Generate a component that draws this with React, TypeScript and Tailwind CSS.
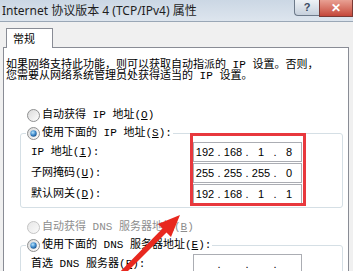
import React, { Fragment } from "react";

function Radio({ id, checked, disabled }: { id: string; checked?: boolean; disabled?: boolean }) {
  return (
    <svg width="13" height="13" viewBox="0 0 13 13" className="shrink-0">
      <defs>
        <linearGradient id={`o${id}`} x1="0" y1="0" x2="1" y2="1">
          <stop offset="0" stopColor={disabled ? "#e6e6e6" : "#d8d8d8"} />
          <stop offset="1" stopColor={disabled ? "#fbfbfb" : "#ffffff"} />
        </linearGradient>
        <radialGradient id={`d${id}`} cx="0.4" cy="0.35" r="0.7">
          <stop offset="0" stopColor="#b9e6ff" />
          <stop offset="0.6" stopColor="#3a86c8" />
          <stop offset="1" stopColor="#1b4f86" />
        </radialGradient>
      </defs>
      <circle cx="6.5" cy="6.5" r="6" fill={`url(#o${id})`} stroke={disabled ? "#c4c4c4" : "#8f9091"} strokeWidth="1" />
      {checked && <circle cx="6.5" cy="6.5" r="3.2" fill={`url(#d${id})`} />}
    </svg>
  );
}

function IpBox({ parts }: { parts: string[] }) {
  return (
    <div className="w-[109px] h-[20px] shrink-0 border border-[#abadb3] bg-white flex items-center pl-[1px] font-['Liberation_Sans',sans-serif] text-[11px] text-black">
      {parts.map((p, i) => (
        <Fragment key={i}>
          <span className="w-[20px] text-center">{p}</span>
          {i < 3 && <span className="w-[8px] text-center">.</span>}
        </Fragment>
      ))}
    </div>
  );
}

function Row({ label, k, parts }: { label: string; k: string; parts: string[] }) {
  return (
    <div className="flex items-center h-[20px] mb-[1px] pl-[10px]">
      <span className="w-[162px] shrink-0 whitespace-nowrap">
        {label}(<span className="underline">{k}</span>):
      </span>
      <IpBox parts={parts} />
    </div>
  );
}

export default function App() {
  return (
    <div className="relative w-[353px] h-[271px] overflow-hidden bg-[#f0f0f0] text-black">
      {/* Title bar */}
      <div className="h-[22px] flex items-start justify-between border-b border-[#9aa7b6] bg-gradient-to-b from-[#cbd7e4] to-[#dde5ee]">
        <div className="h-[21px] flex items-center pl-[2px] font-['Noto_Sans','Noto_Sans_CJK_SC',sans-serif] text-[12px] text-[#1e1e1e] whitespace-nowrap">
          Internet 协议版本 4 (TCP/IPv4) 属性
        </div>
        <div className="flex items-start">
          <div className="w-[25px] h-[16px] rounded-bl-[4px] border border-t-0 border-r-0 border-[#6d7a8a] bg-gradient-to-b from-[#eef2f6] to-[#c6d0dc] flex items-center justify-center font-['Liberation_Sans',sans-serif] text-[11px] font-bold text-[#3a4b62]">
            ?
          </div>
          <div className="w-[34px] h-[17px] border border-t-0 border-[#7a3a35] bg-gradient-to-b from-[#e8a093] to-[#c4463a] flex items-center justify-center font-['Liberation_Sans',sans-serif] text-[12px] font-bold text-white">
            ✕
          </div>
        </div>
      </div>

      {/* Body */}
      <div className="pt-[6px] font-['Liberation_Mono','Noto_Sans_CJK_SC',monospace] text-[11px]">
        <div className="relative z-10 ml-[6px] w-[47px] h-[20px] -mb-[1px] bg-white border border-b-0 border-[#898c95] flex items-center pl-[6px] font-['Noto_Sans_CJK_SC',sans-serif]">
          常规
        </div>
        <div className="ml-[3px] mr-[4px] h-[260px] bg-white border border-[#898c95]">
          <p className="pt-[12px] pl-[2px] leading-[11px] whitespace-nowrap">
            如果网络支持此功能，则可以获取自动指派的 IP 设置。否则，
            <br />
            您需要从网络系统管理员处获得适当的 IP 设置。
          </p>

          <div className="mt-[24px] h-[18px] pl-[23px] flex items-center gap-[2px] whitespace-nowrap">
            <Radio id="r1" />
            <span>
              自动获得 IP 地址(<span className="underline">O</span>)
            </span>
          </div>

          <fieldset className="ml-[16px] mr-[5px] border border-[#d5dfe5] rounded-[3px] pb-[2px]">
            <legend className="ml-[5px] px-[1px] bg-white">
              <span className="h-[18px] flex items-center gap-[2px] whitespace-nowrap">
                <Radio id="r2" checked />
                <span>
                  使用下面的 IP 地址(<span className="underline">S</span>):
                </span>
              </span>
            </legend>
            <Row label="IP 地址" k="I" parts={["192", "168", "1", "8"]} />
            <Row label="子网掩码" k="U" parts={["255", "255", "255", "0"]} />
            <Row label="默认网关" k="D" parts={["192", "168", "1", "1"]} />
          </fieldset>

          <div className="mt-[10px] h-[18px] pl-[23px] flex items-center gap-[2px] whitespace-nowrap text-[#8d8d8d]">
            <Radio id="r3" disabled />
            <span>
              自动获得 DNS 服务器地址(<span className="underline">B</span>)
            </span>
          </div>

          <fieldset className="ml-[16px] mr-[5px] border border-[#d5dfe5] rounded-[3px] pb-[2px]">
            <legend className="ml-[5px] px-[1px] bg-white">
              <span className="h-[18px] flex items-center gap-[2px] whitespace-nowrap">
                <Radio id="r4" checked />
                <span>
                  使用下面的 DNS 服务器地址(<span className="underline">E</span>):
                </span>
              </span>
            </legend>
            <Row label="首选 DNS 服务器" k="P" parts={["", "", "", ""]} />
          </fieldset>
        </div>
      </div>

      {/* Red annotation box */}
      <div className="absolute left-[190px] top-[133px] w-[116px] h-[73px] border-[3px] border-[#e8383d]" />

      {/* Red arrow */}
      <svg className="absolute left-0 top-0" width="353" height="271" viewBox="0 0 353 271">
        <polygon
          points="180,215 171,237 166.5,232.5 116.5,282.5 113,279 162.5,228.5 158,224"
          fill="#e8281f"
        />
      </svg>
    </div>
  );
}
